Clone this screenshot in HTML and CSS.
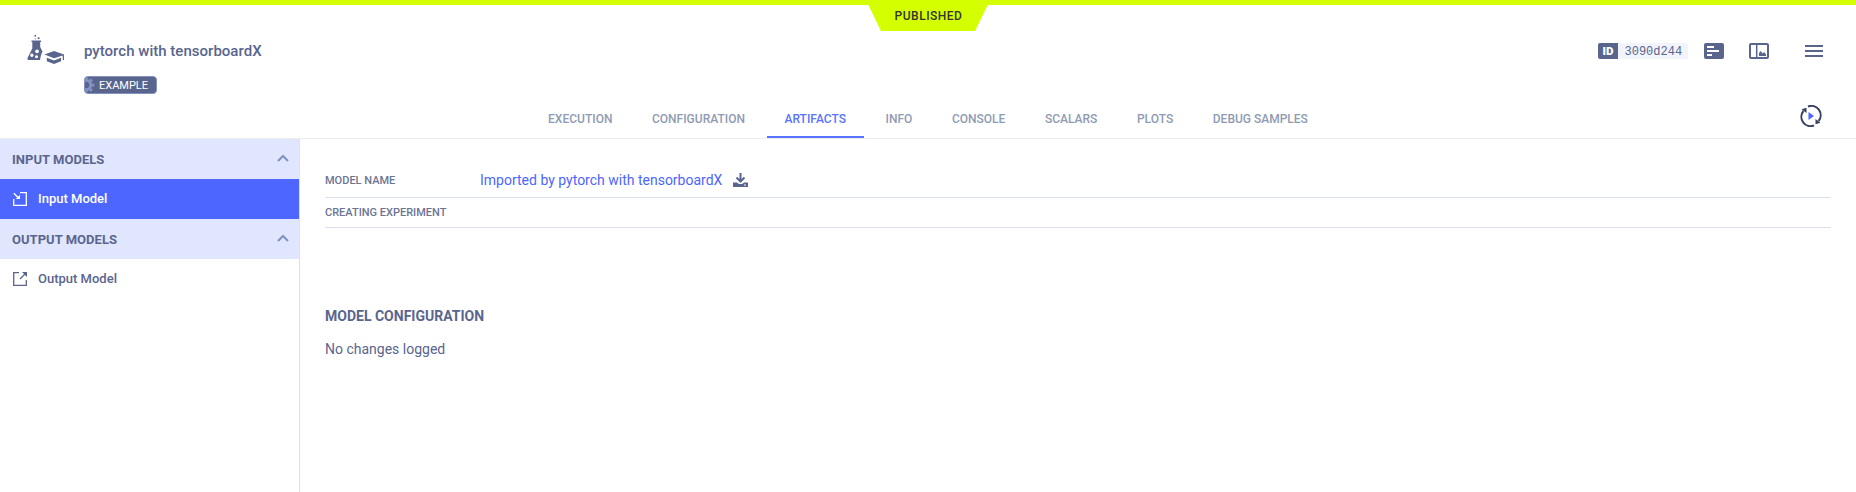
FILE: index.html
```html
<!DOCTYPE html>
<html lang="en">
<head>
<meta charset="utf-8">
<title>pytorch with tensorboardX</title>
<link rel="stylesheet" href="styles.css">
</head>
<body>
<header class="header">
  <div class="status-bar"><span class="status-label">PUBLISHED</span></div>
  <div class="title-row">
    <svg class="type-icon" width="38" height="32" viewBox="0 0 38 32" fill="#5a658e">
      <rect x="7.5" y="0" width="1.6" height="1.6"/><rect x="10.7" y="2.3" width="1.8" height="1.8"/><rect x="7.8" y="3.5" width="1" height="1"/>
      <path fill-rule="evenodd" d="M4.5 5.5H14V7H13.2V12L15.5 16.5 14 20 13 25H1.5Q0 25 .5 23L5.3 13.5V7H4.5ZM10 14.5a1.9 1.9 0 1 0 .1 0ZM4.8 18.5a1.7 1.7 0 1 0 .1 0ZM9.5 20.3a1.5 1.5 0 1 0 .1 0Z"/>
      <path d="M17.5 19.5 27 16l10 3.5V25h-1.2v-4.5L27 23.2ZM19.8 22.8 27 25.6l7-2.8v3.5L27 29l-7.2-2.7Z"/>
    </svg>
    <h1 class="title">pytorch with tensorboardX</h1>
    <div class="actions">
      <div class="id"><span class="id-key">ID</span><span class="id-value">3090d244</span></div>
      <svg class="details-icon" width="20" height="16" viewBox="0 0 20 16"><rect width="20" height="16" rx="2" fill="#5a658e"/><path d="M3 4h7M3 8h12M3 12h5" stroke="#fff" stroke-width="2"/></svg>
      <svg class="split-icon" width="20" height="16" viewBox="0 0 20 16"><rect x="1" y="1" width="18" height="14" rx="1" fill="#fff" stroke="#5a658e" stroke-width="2"/><path d="M7.7 1v14" stroke="#5a658e" stroke-width="1.5"/><path d="M10 13V10l1.7-2 2 2.5 1.5-1.5 1.8 2.5V13Z" fill="#5a658e"/></svg>
      <svg class="menu-icon" width="18" height="12" viewBox="0 0 18 12"><path d="M0 1h18M0 6h18M0 11h18" stroke="#5a658e" stroke-width="2"/></svg>
    </div>
  </div>
  <div class="tag">
    <svg width="10" height="16" viewBox="0 0 10 16"><circle cx="1" cy="8" r="4.7" fill="none" stroke="#8492c2" stroke-width="3"/><circle cx="1" cy="8" r="7" fill="none" stroke="#8492c2" stroke-width="2.6" stroke-dasharray="3 2.5" stroke-dashoffset="1.5"/></svg>
    <span>EXAMPLE</span>
  </div>
  <nav class="tabs">
    <a class="tab">EXECUTION</a><a class="tab">CONFIGURATION</a><a class="tab active">ARTIFACTS</a><a class="tab">INFO</a><a class="tab">CONSOLE</a><a class="tab">SCALARS</a><a class="tab">PLOTS</a><a class="tab">DEBUG SAMPLES</a>
    <svg class="refresh-icon" width="22" height="22" viewBox="0 0 22 22" fill="none"><path d="M8 1.5A9.3 9.3 0 0 1 18.6 16M14 20.5A9.3 9.3 0 0 1 3.4 6" stroke="#384161" stroke-width="2"/><path d="M15.5 14v5.3l5-1.6ZM6.5 8V2.7l-5 1.6Z" fill="#384161"/><path d="M8.5 7v8l5.5-4Z" fill="#4d66ff"/></svg>
  </nav>
</header>
<main class="main">
  <aside class="sidebar">
    <div class="group">INPUT MODELS<svg width="12" height="8" viewBox="0 0 12 8"><path d="M1 7l5-5 5 5" fill="none" stroke="#8492c2" stroke-width="2"/></svg></div>
    <div class="item selected"><svg width="14" height="14" viewBox="0 0 14 14" fill="none" stroke="currentColor" stroke-width="1.3"><path d="M7 .7h6.3v12.6H.7V7M.8 1.2l5 5"/><path d="M7 2.8V7H2.8Z" fill="currentColor" stroke="none"/></svg>Input Model</div>
    <div class="group">OUTPUT MODELS<svg width="12" height="8" viewBox="0 0 12 8"><path d="M1 7l5-5 5 5" fill="none" stroke="#8492c2" stroke-width="2"/></svg></div>
    <div class="item"><svg width="14" height="14" viewBox="0 0 14 14" fill="none" stroke="currentColor" stroke-width="1.3"><path d="M6 .7H.7v12.6h12.6V8M7 7l5.5-5.5"/><path d="M9 0h5v5Z" fill="currentColor" stroke="none"/></svg>Output Model</div>
  </aside>
  <section class="content">
    <div class="row name-row"><span class="label">MODEL NAME</span><a class="link">Imported by pytorch with tensorboardX</a>
      <svg class="download-icon" width="15" height="14" viewBox="0 0 15 14"><path d="M7.5 0v8M3.5 4.5l4 4 4-4" fill="none" stroke="#5a658e" stroke-width="2"/><path fill-rule="evenodd" d="M0 9.5h4l2 1.5h3l2-1.5h4V14H0ZM11 11.5v1h2v-1Z" fill="#5a658e"/></svg>
    </div>
    <div class="row"><span class="label">CREATING EXPERIMENT</span></div>
    <h2 class="section-title">MODEL CONFIGURATION</h2>
    <p class="empty">No changes logged</p>
  </section>
</main>
</body>
</html>
```
FILE: styles.css
```css
* { box-sizing: border-box; }
body { margin: 0; height: 492px; overflow: hidden; display: flex; flex-direction: column; background: #fff; color: #5a658e; font-family: Roboto, sans-serif; font-size: 14px; }
.header { height: 139px; flex: none; border-bottom: 1px solid #ededed; display: flex; flex-direction: column; }
.status-bar { height: 31px; flex: none; display: flex; justify-content: center; background: linear-gradient(#d3ff00, #d3ff00) 0 0 / 100% 5px no-repeat; }
.status-label { width: 124px; height: 31px; line-height: 32px; padding-left: 1px; text-align: center; background: #d3ff00; clip-path: polygon(0 0, 100% 0, 109px 100%, 15px 100%); color: #333; font-size: 12px; font-weight: 500; letter-spacing: .5px; }
.title-row { height: 40px; flex: none; display: flex; align-items: center; padding: 0 24px 0 27px; }
.title { margin: 0 0 0 19px; font-size: 15px; line-height: 20px; font-weight: 500; letter-spacing: .02px; }
.actions { margin-left: auto; display: flex; align-items: center; }
.id { display: flex; height: 16px; line-height: 16px; border-radius: 2px; overflow: hidden; }
.id-key { width: 20px; text-align: center; background: #5a658e; color: #fff; font-size: 11.5px; font-weight: 900; }
.id-value { width: 70px; padding-left: 6.5px; line-height: 18px; background: #f2f4fc; font-family: "Liberation Mono", monospace; font-size: 12px; }
.details-icon { margin-left: 16px; }
.split-icon { margin-left: 25px; }
.menu-icon { margin: 0 9px 0 36px; }
.tag { margin: 5px 0 0 84px; width: 73px; height: 18px; flex: none; display: flex; align-items: center; border: 1px solid #8492c2; border-radius: 4px; background: #5a658e; color: #fff; font-size: 11px; line-height: 16px; overflow: hidden; }
.tag span { margin-left: 4px; padding-top: 2px; }
.tabs { position: relative; height: 38px; margin-top: auto; display: flex; justify-content: center; gap: 3.6px; }
.tab { padding: 0 18px; line-height: 39px; height: 38px; font-size: 12px; font-weight: 500; color: #8f9bb3; border-bottom: 2px solid transparent; }
.tab.active { color: #5a73ff; border-color: #5a73ff; }
.refresh-icon { position: absolute; right: 34px; top: 5px; }
.main { flex: 1; display: flex; min-height: 0; }
.sidebar { width: 300px; flex: none; border-right: 1px solid #dce0ee; font-size: 13px; font-weight: 500; }
.group, .item { height: 40px; display: flex; align-items: center; }
.group { justify-content: space-between; padding: 0 10px 0 12px; background: #e1e6ff; font-weight: 700; letter-spacing: .03px; }
.group svg { margin-top: -3px; }
.item { padding: 0 0 1px 13px; gap: 11px; }
.item svg { margin-top: 1px; }
.item.selected { background: #4d66ff; color: #fff; }
.content { flex: 1; padding: 24px 25px 0; }
.row { height: 30px; display: flex; align-items: center; border-bottom: 1px solid #dce0ee; }
.name-row { height: 35px; }
.label { width: 155px; color: #6c7493; font-size: 11px; font-weight: 500; white-space: nowrap; }
.link { color: #4d66ff; }
.download-icon { margin-left: 11px; }
.section-title { margin: 78px 0 0; font-size: 14px; line-height: 20px; font-weight: 700; }
.empty { margin: 13px 0 0; line-height: 20px; }
```
